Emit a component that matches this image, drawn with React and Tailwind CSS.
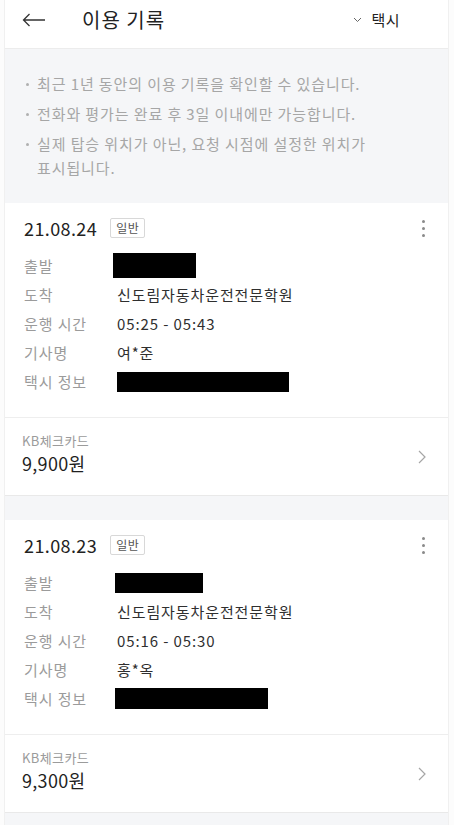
import React from 'react';

const font = { fontFamily: '"Noto Sans CJK KR", "Noto Sans", sans-serif' };

const notices = [
  '최근 1년 동안의 이용 기록을 확인할 수 있습니다.',
  '전화와 평가는 완료 후 3일 이내에만 가능합니다.',
  '실제 탑승 위치가 아닌, 요청 시점에 설정한 위치가 표시됩니다.',
];

const rides = [
  {
    date: '21.08.24',
    start: { ml: 'ml-[-4px]', w: 'w-[83px]', h: 'h-[25px]' },
    dest: '신도림자동차운전전문학원',
    time: '05:25 - 05:43',
    driver: '여*준',
    taxi: { ml: 'ml-0', w: 'w-[172px]', h: 'h-[20px]' },
    card: 'KB체크카드',
    price: '9,900원',
  },
  {
    date: '21.08.23',
    start: { ml: 'ml-[-2px]', w: 'w-[88px]', h: 'h-[20px]' },
    dest: '신도림자동차운전전문학원',
    time: '05:16 - 05:30',
    driver: '홍*옥',
    taxi: { ml: 'ml-[-2px]', w: 'w-[153px]', h: 'h-[21px]' },
    card: 'KB체크카드',
    price: '9,300원',
  },
];

function Row({ label, children }) {
  return (
    <div className="flex items-center h-[29px]">
      <div className="w-[93px] text-[15px] tracking-[0.9px] text-[#9b9b9b]">{label}</div>
      <div className="flex-1 text-[15px] tracking-[0.9px] text-[#2f2f2f]">{children}</div>
    </div>
  );
}

function Redact({ box }) {
  return <div className={`${box.ml} ${box.w} ${box.h} bg-black`} />;
}

function RideCard({ ride }) {
  return (
    <div className="bg-white border-b border-[#e9e9e9]">
      {/* 상단 정보 */}
      <div className="px-[19px] pt-[12px] pb-[21px] border-b border-[#eeeeee]">
        <div className="flex items-center h-[26px]">
          <span className="text-[18px] tracking-[0.4px] text-[#222] leading-[26px]">{ride.date}</span>
          <span className="ml-[13px] px-[5px] h-[20px] flex items-center text-[12px] tracking-[0.6px] text-[#555] border border-[#d8d8d8] rounded-[2px]">
            일반
          </span>
          <div className="ml-auto mr-[4px] flex flex-col gap-[4px]">
            <span className="w-[3px] h-[3px] rounded-full bg-[#8a8a8a]" />
            <span className="w-[3px] h-[3px] rounded-full bg-[#8a8a8a]" />
            <span className="w-[3px] h-[3px] rounded-full bg-[#8a8a8a]" />
          </div>
        </div>
        <div className="mt-[10px] leading-[29px]">
          <Row label="출발"><Redact box={ride.start} /></Row>
          <Row label="도착">{ride.dest}</Row>
          <Row label="운행 시간">{ride.time}</Row>
          <Row label="기사명">{ride.driver}</Row>
          <Row label="택시 정보"><Redact box={ride.taxi} /></Row>
        </div>
      </div>
      {/* 결제 정보 */}
      <div className="flex items-center pl-[17px] pr-[19px] pt-[14px] pb-[19px]">
        <div className="flex-1">
          <div className="text-[13px] leading-[18px] tracking-[0.4px] text-[#9b9b9b]">{ride.card}</div>
          <div className="text-[18px] leading-[26px] tracking-[0.3px] text-[#1f1f1f]">{ride.price}</div>
        </div>
        <svg width="8" height="14" viewBox="0 0 8 14" className="mr-[3px] mt-[6px]">
          <path d="M1 1l6 6-6 6" fill="none" stroke="#a6a6a6" strokeWidth="1.2" />
        </svg>
      </div>
    </div>
  );
}

export default function App() {
  return (
    <div className="min-h-screen bg-[#fcfcfc]" style={font}>
      <div className="ml-[4px] mr-[5px] bg-[#f5f6f8] min-h-screen border-x border-[#f0f0f0]">
        {/* Header */}
        <div className="h-[49px] pb-[8px] bg-white flex items-center border-b border-[#ececec]">
          <svg width="24" height="14" viewBox="0 0 24 14" className="ml-[17px]">
            <path d="M23 7H1.5M7.5 1L1.5 7l6 6" fill="none" stroke="#333" strokeWidth="1.3" />
          </svg>
          <span className="ml-[36px] text-[20px] tracking-[1px] text-[#222]">이용 기록</span>
          <div className="ml-auto mr-[48px] flex items-center">
            <svg width="9" height="6" viewBox="0 0 9 6" className="mr-[9px]">
              <path d="M1 1l3.5 3.5L8 1" fill="none" stroke="#666" strokeWidth="1" />
            </svg>
            <span className="text-[15px] tracking-[0.5px] text-[#222]">택시</span>
          </div>
        </div>

        {/* 안내 */}
        <div className="pt-[23px] pb-[23px] pl-[21px] pr-[70px]">
          <ul className="space-y-[6px]">
            {notices.map((n, i) => (
              <li key={i} className="flex text-[15px] leading-[24px] tracking-[0.9px] text-[#a6a6a6]">
                <span className="w-[11px] shrink-0 pt-[11px]">
                  <span className="block w-[3px] h-[3px] rounded-full bg-[#b0b0b0]" />
                </span>
                <span>{n}</span>
              </li>
            ))}
          </ul>
        </div>

        {/* 목록 */}
        <div className="flex flex-col gap-[24px]">
          {rides.map((r, i) => (
            <RideCard key={i} ride={r} />
          ))}
        </div>
      </div>
    </div>
  );
}
